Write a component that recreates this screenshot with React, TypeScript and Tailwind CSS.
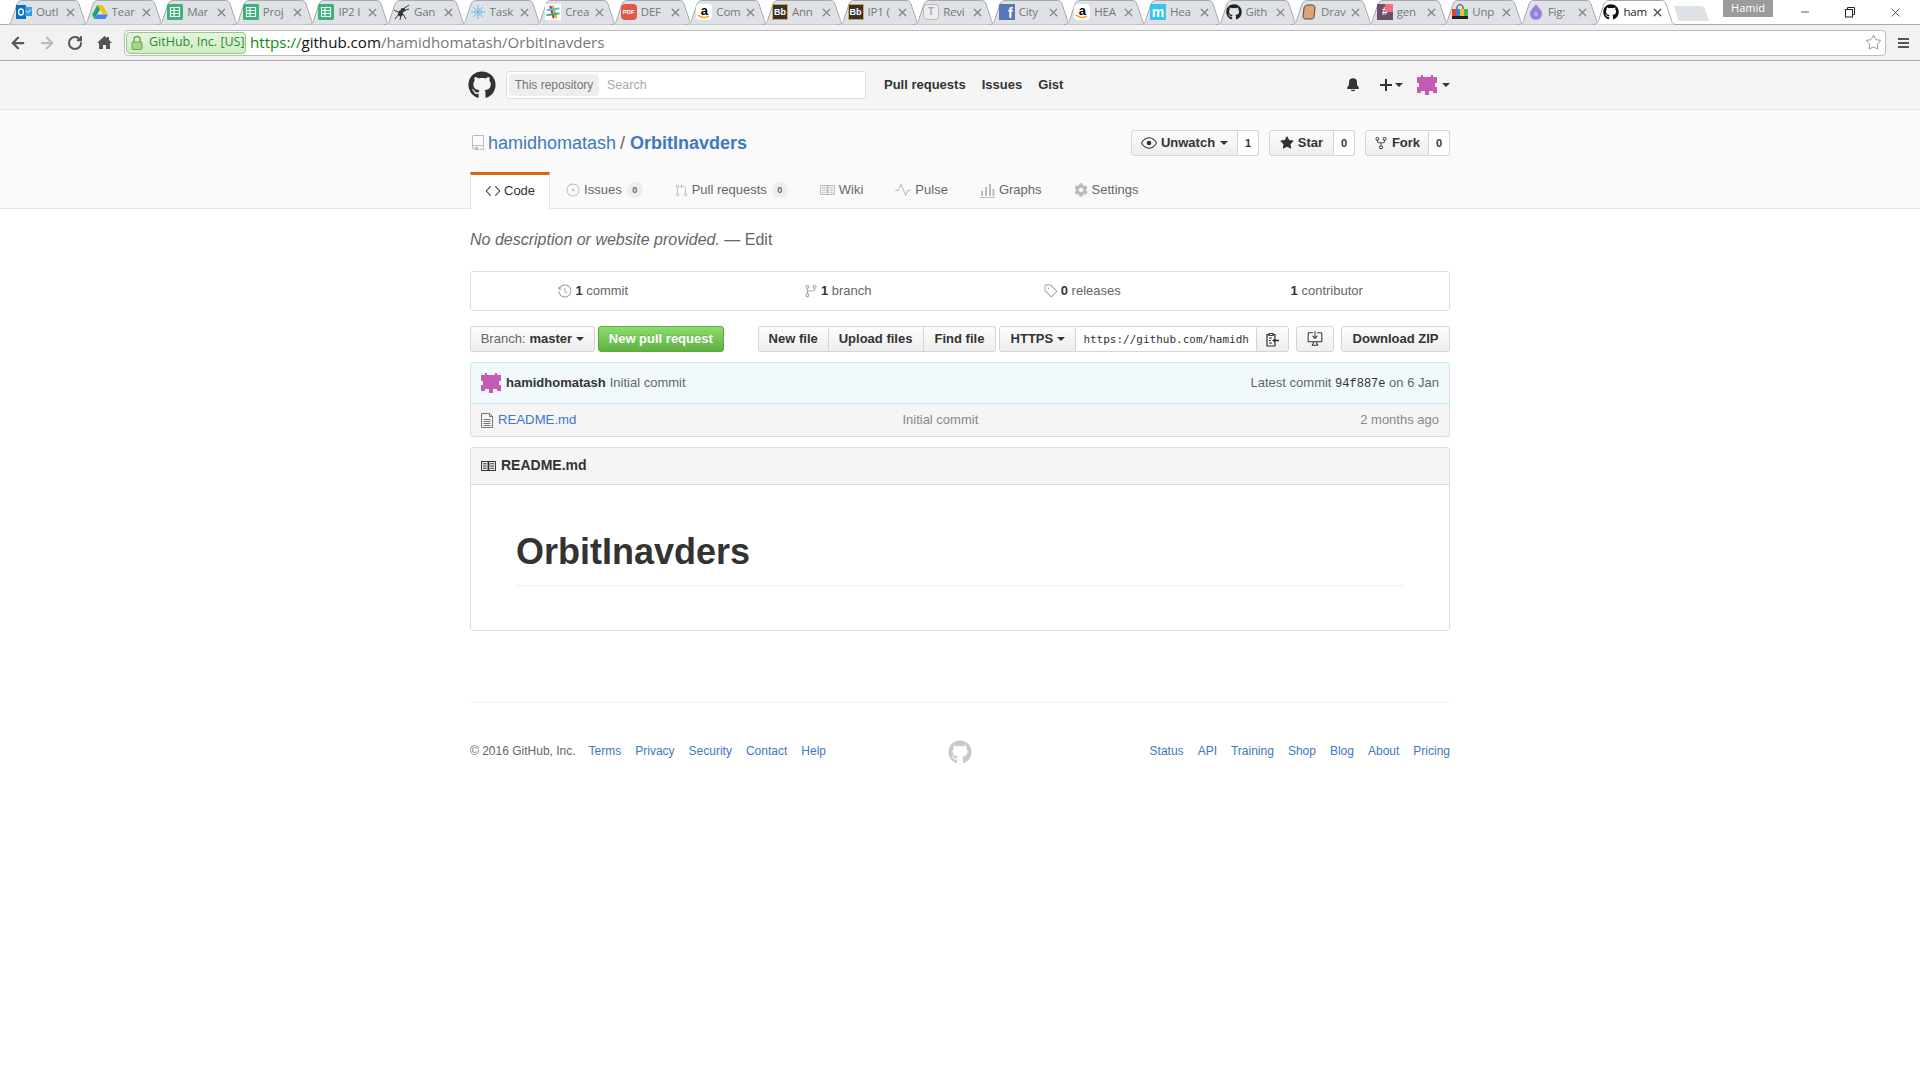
import React from "react";
import { GoRepo, GoCode, GoIssueOpened, GoGitPullRequest, GoPulse, GoEye, GoStarFill, GoRepoForked, GoBellFill, GoHistory, GoGitBranch, GoTag, GoDesktopDownload } from "react-icons/go";
import { FaGithub as GoMarkGithub, FaCog } from "react-icons/fa";
import { ArrowLeft, ArrowRight, RotateCw, Star, X, Minus } from "lucide-react";

function Caret({ className = "border-t-[#333]" }: { className?: string }) {
  return <span className={"inline-block w-0 h-0 border-x-[4px] border-x-transparent border-t-[4px] " + className} />;
}

function BookIcon({ size = 16 }: { size?: number }) {
  return (
    <svg width={size} height={size * 0.8} viewBox="0 0 16 13" fill="none" stroke="currentColor" strokeWidth="1.1">
      <path d="M.5 1.500h7v10h-7zM8.500 1.500h7v10h-7zM2 4h4M2 6.500h4M2 9h4M10 4h4M10 6.500h4M10 9h4" />
    </svg>
  );
}

function FileIcon() {
  return (
    <svg width="12" height="15" viewBox="0 0 12 15" fill="none" stroke="#777" strokeWidth="1">
      <path d="M.5.500h8l3 3v11H.5zM8.500.500v3h3M2.500 6.500h7M2.500 8.500h7M2.500 10.500h7M2.500 12.500h7" />
    </svg>
  );
}

function GraphIcon() {
  return (
    <svg width="15" height="15" viewBox="0 0 15 15" fill="currentColor">
      <rect x="0" y="14" width="15" height="1" />
      <rect x="1" y="8" width="2" height="5" />
      <rect x="5" y="4" width="2" height="9" />
      <rect x="9" y="1" width="2" height="12" />
      <rect x="12.500" y="6" width="2" height="7" />
    </svg>
  );
}

function Sheets() {
  return (
    <svg width="16" height="16" viewBox="0 0 16 16">
      <rect width="16" height="16" rx="1.5" fill="#3db37a" />
      <path d="M3.5 3.5h9v9h-9zM3.5 6.5h9M3.5 9.5h9M7 3.5v9" fill="none" stroke="#fff" strokeWidth="1.1" />
    </svg>
  );
}

function Letter({ bg, color, text, cls = "" }: { bg: string; color: string; text: string; cls?: string }) {
  return (
    <span className={"w-4 h-4 flex items-center justify-center text-[10px] font-bold leading-none [font-family:'Liberation_Sans',sans-serif] " + cls} style={{ background: bg, color }}>
      {text}
    </span>
  );
}

function Amazon() {
  return (
    <span className="relative w-4 h-4 bg-white rounded-sm flex justify-center">
      <span className="text-[13px] font-bold leading-[13px] text-black [font-family:'Liberation_Sans',sans-serif]">a</span>
      <svg className="absolute left-0 bottom-0" width="16" height="6" viewBox="0 0 16 6"><path d="M2 1c3 3 8 3 11 1" fill="none" stroke="#f90" strokeWidth="1.5" /></svg>
    </span>
  );
}

const favicons: React.ReactNode[] = [
  <svg key="o" width="16" height="16" viewBox="0 0 16 16"><rect x="0" y="1" width="10" height="14" fill="#0a6fc2" /><rect x="9" y="3" width="7" height="9" fill="#3d9be0" /><path d="M10.5 7l1.5 1.5 3-3" stroke="#fff" fill="none" /><ellipse cx="5" cy="8" rx="2.4" ry="3" fill="none" stroke="#fff" strokeWidth="1.3" /></svg>,
  <svg key="d" width="16" height="16" viewBox="0 0 16 16"><path d="M5.5 1h5L16 10.5h-5z" fill="#f4c20d" /><path d="M5.5 1L0 10.5 2.6 15 8 5.6z" fill="#1fa463" /><path d="M2.6 15h10.8L16 10.5H5.3z" fill="#4285f4" /></svg>,
  <Sheets key="s1" />, <Sheets key="s2" />, <Sheets key="s3" />,
  <svg key="a" width="16" height="16" viewBox="0 0 16 16"><ellipse cx="9" cy="6" rx="2.5" ry="2" fill="#333" /><ellipse cx="6.5" cy="9.5" rx="2.5" ry="3" fill="#333" /><path d="M9 5L15 1M9 7L15 5M5 10L1 15M7 11L6 16M9 10L12 15M4 8L0 6" stroke="#333" strokeWidth="1" /></svg>,
  <svg key="t" width="16" height="16" viewBox="0 0 16 16" stroke="#6cb7e6" strokeWidth="1" fill="none"><path d="M8 1v14M1 8h14M3 3l10 10M13 3L3 13" /><circle cx="8" cy="8" r="3.5" strokeDasharray="1.5 1" /></svg>,
  <svg key="sl" width="16" height="16" viewBox="0 0 16 16" strokeWidth="2.2" strokeLinecap="round"><rect width="16" height="16" fill="#fff" /><path d="M5.5 2.5l3 11" stroke="#e01e5a" /><path d="M10 2.5l3 11" stroke="#e8a820" transform="translate(-2 0)" /><path d="M2.5 6l11-1.5" stroke="#36c5f0" /><path d="M2.5 11l11-1.5" stroke="#2eb67d" /></svg>,
  <Letter key="p" bg="#e2574c" color="#fff" text="PDF" cls="!text-[6px] rounded-sm" />,
  <Amazon key="am1" />,
  <Letter key="b1" bg="#333" color="#fff" text="Bb" cls="border border-[#d9a441] !text-[9px]" />,
  <Letter key="b2" bg="#333" color="#fff" text="Bb" cls="border border-[#d9a441] !text-[9px]" />,
  <Letter key="tt" bg="#eeeeee" color="#aaa" text="T" cls="border border-[#bbb] rounded-sm" />,
  <Letter key="f" bg="#5a76b4" color="#fff" text="f" cls="!text-[14px] items-end justify-end pr-[2px]" />,
  <Amazon key="am2" />,
  <Letter key="m" bg="#34c6ec" color="#fff" text="m" cls="!text-[14px]" />,
  <GoMarkGithub key="g1" size={16} color="#222" />,
  <svg key="br" width="16" height="16" viewBox="0 0 16 16"><path d="M3 4c0-2 2-3 4-3h4c2 0 3 1 3 3l-1 9c0 1-1 2-2 2H5c-2 0-3-1-3-2z" fill="#d9a574" stroke="#5b4630" /></svg>,
  <span key="hs" className="relative w-4 h-4 bg-[#6a4e6e] flex items-center justify-center text-white text-[10px] font-bold leading-none [font-family:'Liberation_Sans',sans-serif]">#<span className="absolute right-0 top-0 w-2 h-2 bg-[#f2727f]" /></span>,
  <svg key="bag" width="16" height="16" viewBox="0 0 16 16"><path d="M5 5V3c0-3 6-3 6 0v2" fill="none" stroke="#333" /><rect y="5" width="4" height="8" fill="#e0452c" /><rect x="4" y="5" width="4" height="8" fill="#3b82d6" /><rect x="8" y="5" width="4" height="8" fill="#f2c029" /><rect x="12" y="5" width="4" height="8" fill="#4caf50" /><rect y="12" width="16" height="3" fill="#222" /></svg>,
  <svg key="dr" width="16" height="16" viewBox="0 0 16 16"><path d="M8 0c2 3 6 6 6 10a6 6 0 0 1-12 0c0-4 4-7 6-10z" fill="#9a7fe0" /><circle cx="8" cy="10" r="2" fill="#c6b6f0" /></svg>,
  <GoMarkGithub key="g2" size={16} color="#111" />,
];

const titles = ["Outl", "Tear", "Mar", "Proj", "IP2 I", "Gan", "Task", "Crea", "DEF", "Com", "Ann", "IP1 (", "Revi", "City", "HEA", "Hea", "Gith", "Drav", "gen", "Unp", "Fig:", "ham"];

function BrowserTab({ i }: { i: number }) {
  const active = i === titles.length - 1;
  return (
    <div className={"relative w-[75.6px] h-[25px] shrink-0 " + (active ? "z-10" : "")}>
      <svg className="absolute left-0 top-0" width="84" height="25" viewBox="0 0 84 25">
        <path d="M0 24.5C4 24.5 5 23 6 19L11 4C12 1.5 14 .5 16 .5H68C71 .5 72 1.5 73 4L78 19C79 23 80 24.5 84 24.5" fill={active ? "#ffffff" : "#dee1e6"} stroke="#a8a9ad" />
      </svg>
      <div className="relative flex items-center h-[24px] pl-[10px]">
        <span className="w-4 h-4 shrink-0 flex">{favicons[i]}</span>
        <span className={"ml-[4px] w-[26px] overflow-hidden whitespace-nowrap text-[11.5px] tracking-[-0.2px] leading-[24px] [font-family:'Open_Sans',sans-serif] " + (active ? "text-[#222]" : "text-[#777]")}>{titles[i]}</span>
        <X className={"ml-[2px] shrink-0 " + (active ? "text-[#555]" : "text-[#888]")} size={13} strokeWidth={2.5} />
      </div>
    </div>
  );
}

function BrowserChrome() {
  return (
    <div className="[font-family:'Open_Sans',sans-serif]">
      <div className="h-[25px] flex bg-white border-b border-[#a8a9ad] pl-[6px] relative">
        {titles.map((_, i) => <BrowserTab key={i} i={i} />)}
        <svg className="ml-[5px] mt-[5px] shrink-0" width="36" height="17" viewBox="0 0 36 17"><path d="M0 1h27c2 0 3 1 4 3l4 12H6c-1 0-2-1-2-2z" fill="#dee1e6" /></svg>
        <div className="ml-[13px] w-[50px] h-[17px] bg-[#9b9b9b] text-white text-[11px] leading-[16px] text-center shrink-0">Hamid</div>
        <Minus className="ml-[26px] mt-[6px] shrink-0 text-[#222]" size={12} strokeWidth={1.5} />
        <svg className="ml-[33px] mt-[6px] shrink-0" width="12" height="12" viewBox="0 0 12 12" fill="none" stroke="#222"><rect x="1.5" y="3.5" width="7" height="7.5" /><path d="M3.5 3.5v-2h7v7h-2" /></svg>
        <X className="ml-[32px] mt-[5px] shrink-0 text-[#222]" size={15} strokeWidth={1.2} />
      </div>
      <div className="h-[36px] bg-[#f2f2f2] border-b border-[#a9a9a9] flex items-center">
        <ArrowLeft className="ml-[9px] text-[#555]" size={18} strokeWidth={3} />
        <ArrowRight className="ml-[11px] text-[#bdbdbd]" size={18} strokeWidth={3} />
        <RotateCw className="ml-[11px] text-[#555]" size={16} strokeWidth={3} />
        <svg className="ml-[14px]" width="15" height="15" viewBox="0 0 15 15"><path d="M7.5 1L0 8h2v6h4v-4h3v4h4V8h2l-3-3V2h-2v1z" fill="#555" /></svg>
        <div className="ml-[12px] w-[1762px] h-[26px] bg-white border border-[#bdbdbd] rounded-sm flex items-center pl-[1px] relative">
          <div className="w-[120px] h-[22px] flex items-center bg-linear-to-b from-[#e6f4e0] to-[#d0ebc4] border border-[#97cc80] rounded-sm pl-[4px] text-[12.5px] text-[#1e8f1e] whitespace-nowrap">
            <svg className="mr-[6px] shrink-0" width="12" height="15" viewBox="0 0 12 15"><path d="M3 7V4.5a3 3 0 0 1 6 0V7" fill="none" stroke="#72a94f" strokeWidth="1.5" /><rect x="1" y="7" width="10" height="7.5" rx="1" fill="#a6d585" stroke="#6da34b" /></svg>
            GitHub, Inc. [US]
          </div>
          <span className="ml-[4px] text-[15.1px] leading-none whitespace-nowrap text-[#777]"><span className="text-[#0f8a0f]">https://</span><span className="text-[#111]">github.com</span>/hamidhomatash/OrbitInavders</span>
          <Star className="ml-auto mr-[3px] text-[#888]" size={17} strokeWidth={1.3} />
        </div>
        <div className="ml-[12px] flex flex-col gap-[2px]">
          <span className="w-[11px] h-[2px] bg-[#555]" /><span className="w-[11px] h-[2px] bg-[#555]" /><span className="w-[11px] h-[2px] bg-[#555]" />
        </div>
      </div>
    </div>
  );
}

function Puzzle({ className = "" }: { className?: string }) {
  return (
    <svg className={className} width="20" height="20" viewBox="0 0 5 5">
      <rect width="5" height="5" fill="#f0f0f0" />
      <path d="M0 .5h1V0h.5v.5h2V0H4v.5h1V2H4.5v1H5v1.500H4v-.5H3v1H2v-1H1v.5H0V3h.5V2H0z" fill="#c35cb5" />
    </svg>
  );
}

function GithubHeader() {
  return (
    <div className="h-[49px] bg-[#f5f5f5] border-b border-[#e5e5e5]">
      <div className="w-[980px] mx-auto h-full flex items-center relative">
        <GoMarkGithub size={28} className="text-[#333] -ml-[2px]" />
        <div className="ml-[10px] w-[360px] h-[28px] bg-white border border-[#ddd] rounded-[3px] flex items-center pl-[2px]">
          <span className="w-[90px] h-[22px] bg-[#eeeeee] rounded-sm text-[12px] leading-[22px] text-center text-[#767676]">This repository</span>
          <span className="ml-[8px] text-[12.5px] text-[#aaa]">Search</span>
        </div>
        <nav className="ml-[18px] flex gap-[16px] font-bold text-[13px] text-[#333]">
          <span>Pull requests</span><span>Issues</span><span>Gist</span>
        </nav>
        <div className="ml-auto flex items-center">
          <GoBellFill size={16} className="text-[#333] -ml-[1px]" />
          <svg className="ml-[18px]" width="14" height="14" viewBox="0 0 14 14" stroke="#333" strokeWidth="2"><path d="M7 1v12M1 7h12" /></svg>
          <Caret className="border-t-[#333] ml-[2px]" />
          <Puzzle className="ml-[14px]" />
          <Caret className="border-t-[#333] ml-[5px]" />
        </div>
      </div>
    </div>
  );
}

function CountButton({ icon, label, count, caret, width }: { icon: React.ReactNode; label: string; count: string; caret?: boolean; width: string }) {
  return (
    <div className="flex h-[26px] text-[13px] font-bold text-[#333]">
      <div className={"flex items-center justify-center gap-[4px] border border-[#d5d5d5] rounded-l-[3px] bg-linear-to-b from-[#fcfcfc] to-[#eeeeee] " + width}>
        {icon}{label}{caret && <Caret className="border-t-[#333] ml-[1px]" />}
      </div>
      <div className="w-[21px] flex items-center justify-center border border-l-0 border-[#d5d5d5] rounded-r-[3px] bg-white text-[11px]">{count}</div>
    </div>
  );
}

function RepoTab({ icon, label, badge, active }: { icon: React.ReactNode; label: string; badge?: string; active?: boolean }) {
  if (active) {
    return (
      <div className="h-[37px] px-[14px] pb-[3px] bg-white border-x border-[#e5e5e5] border-t-[3px] border-t-[#d26911] flex items-center gap-[3px] text-[13px] text-[#333]">
        {icon}{label}
      </div>
    );
  }
  return (
    <div className="h-[36px] px-[16px] flex items-center gap-[4px] text-[13px] text-[#666]">
      <span className="text-[#bbb] flex">{icon}</span>
      {label}
      {badge && <span className="ml-[1px] w-[16px] h-[16px] rounded-full bg-[#eeeeee] text-[9px] font-bold leading-[16px] text-center text-[#666]">{badge}</span>}
    </div>
  );
}

function PageHead() {
  return (
    <div className="h-[99px] bg-[#fafafa] border-b border-[#e5e5e5]">
      <div className="w-[980px] mx-auto">
        <div className="h-[62px] pt-[20px] flex items-start justify-between">
          <div className="flex items-center h-[26px] text-[18px] text-[#4078c0]">
            <GoRepo size={16} className="text-[#bbb] mr-[2px]" />
            <span>hamidhomatash</span><span className="text-[#666] ml-[4px] mr-[5px]">/</span><span className="font-bold">OrbitInavders</span>
          </div>
          <div className="flex gap-[10px]">
            <CountButton width="w-[107px]" icon={<GoEye size={16} />} label="Unwatch" count="1" caret />
            <CountButton width="w-[65px]" icon={<GoStarFill size={14} />} label="Star" count="0" />
            <CountButton width="w-[64px]" icon={<GoRepoForked size={14} />} label="Fork" count="0" />
          </div>
        </div>
        <div className="flex items-start">
          <RepoTab active icon={<GoCode size={16} className="text-[#333]" />} label="Code" />
          <RepoTab icon={<GoIssueOpened size={14} />} label="Issues" badge="0" />
          <RepoTab icon={<GoGitPullRequest size={13} />} label="Pull requests" badge="0" />
          <RepoTab icon={<BookIcon size={15} />} label="Wiki" />
          <RepoTab icon={<GoPulse size={16} />} label="Pulse" />
          <RepoTab icon={<GraphIcon />} label="Graphs" />
          <RepoTab icon={<FaCog size={14} />} label="Settings" />
        </div>
      </div>
    </div>
  );
}

function Summary({ icon, n, label }: { icon?: React.ReactNode; n: string; label: string }) {
  return (
    <div className="flex-1 flex items-center justify-center text-[13px] text-[#666] gap-[3px]">
      {icon && <span className="text-[#999] flex">{icon}</span>}
      <span><b className="text-[#333]">{n}</b> {label}</span>
    </div>
  );
}

const gradBtn = "h-[26px] flex items-center justify-center text-[13px] font-bold text-[#333] border border-[#d5d5d5] bg-linear-to-b from-[#fcfcfc] to-[#eeeeee]";

function RepoContent() {
  return (
    <div className="w-[980px] mx-auto">
      <div className="h-[62px] pt-[20px] text-[16px] leading-[22px] text-[#666]">
        <i>No description or website provided.</i> — Edit
      </div>
      <div className="h-[40px] border border-[#dddddd] rounded-[3px] flex">
        <Summary icon={<GoHistory size={14} />} n="1" label="commit" />
        <Summary icon={<GoGitBranch size={14} />} n="1" label="branch" />
        <Summary icon={<GoTag size={14} />} n="0" label="releases" />
        <Summary n="1" label="contributor" />
      </div>
      <div className="mt-[15px] flex h-[26px]">
        <div className={gradBtn + " w-[125px] rounded-[3px] gap-[4px] font-normal"}>
          <span className="text-[#666] font-normal">Branch:</span> <b>master</b> <Caret />
        </div>
        <div className="ml-[3px] w-[126px] h-[26px] rounded-[3px] flex items-center justify-center text-[13px] font-bold text-white border border-[#5ca941] bg-linear-to-b from-[#8add6d] to-[#60b044] [text-shadow:0_-1px_0_rgba(0,0,0,0.15)]">New pull request</div>
        <div className={gradBtn + " ml-[34px] w-[71px] rounded-l-[3px]"}>New file</div>
        <div className={gradBtn + " w-[95px] border-l-0"}>Upload files</div>
        <div className={gradBtn + " w-[73px] border-l-0 rounded-r-[3px]"}>Find file</div>
        <div className={gradBtn + " ml-[3px] w-[77px] rounded-l-[3px] gap-[4px]"}>HTTPS <Caret /></div>
        <div className="w-[180px] h-[26px] bg-white border-y border-[#d5d5d5] pl-[7px] text-[11px] leading-[26px] text-[#333] [font-family:'DejaVu_Sans_Mono',monospace] overflow-hidden whitespace-nowrap">https://github.com/hamidh</div>
        <div className={gradBtn + " w-[33px] rounded-r-[3px]"}>
          <svg width="13" height="15" viewBox="0 0 13 15" fill="none" stroke="#333" strokeWidth="1.2"><path d="M3 2.500H1v11.500h8v-3M9 6V2.500H7M3 3.500h4V1.500H3zM3 6h3M3 8.500h2M3 11h3" /><path d="M13 8.500H7.500M9.500 6.500l-2 2 2 2" strokeWidth="1.600" /></svg>
        </div>
        <div className={gradBtn + " ml-[7px] w-[38px] rounded-[3px]"}><GoDesktopDownload size={16} /></div>
        <div className={gradBtn + " ml-[7px] w-[109px] rounded-[3px]"}>Download ZIP</div>
      </div>
      <div className="mt-[10px] h-[42px] bg-[#f2f9fc] border border-[#c9e6f2] rounded-t-[3px] flex items-center px-[10px] text-[13px] text-[#666]">
        <Puzzle />
        <b className="ml-[5px] text-[#333]">hamidhomatash</b>
        <span className="ml-[4px]">Initial commit</span>
        <span className="ml-auto">Latest commit <span className="text-[12px] text-[#333] [font-family:'Liberation_Mono',monospace]">94f887e</span> on 6 Jan</span>
      </div>
      <div className="h-[33px] bg-[#f5f5f5] border-x border-b border-[#dddddd] rounded-b-[3px] flex items-center px-[10px] text-[13px] text-[#888]">
        <FileIcon />
        <span className="ml-[5px] text-[13.2px] text-[#4078c0]">README.md</span>
        <span className="ml-[326px]">Initial commit</span>
        <span className="ml-auto">2 months ago</span>
      </div>
      <div className="mt-[10px] border border-[#dddddd] rounded-[3px] h-[184px]">
        <div className="h-[37px] pb-[1px] bg-[#f5f5f5] border-b border-[#dddddd] flex items-center pl-[10px] gap-[5px] text-[14px] font-bold text-[#333]">
          <BookIcon size={15} /> README.md
        </div>
        <div className="px-[45px] pt-[44px]">
          <h1 className="h-[57px] text-[36px] leading-[45px] font-bold text-[#333] border-b border-[#eeeeee]">OrbitInavders</h1>
        </div>
      </div>
      <div className="mt-[71px] border-t border-[#eeeeee] pt-[38px] h-[100px] grid grid-cols-[1fr_auto_1fr] items-start text-[12px] leading-[20px] text-[#666]">
        <div className="flex gap-[14px]">
          <span className="-mr-[1px]">© 2016 GitHub, Inc.</span>
          {["Terms", "Privacy", "Security", "Contact", "Help"].map((t) => <span key={t} className="text-[#4078c0]">{t}</span>)}
        </div>
        <GoMarkGithub size={24} className="text-[#c9c9c9] -mt-[1px]" />
        <div className="flex gap-[14px] justify-end">
          {["Status", "API", "Training", "Shop", "Blog", "About", "Pricing"].map((t) => <span key={t} className="text-[#4078c0]">{t}</span>)}
        </div>
      </div>
    </div>
  );
}

export default function App() {
  return (
    <div className="w-[1920px] h-[1080px] overflow-hidden bg-white [font-family:'Liberation_Sans',Arial,sans-serif]">
      <BrowserChrome />
      <GithubHeader />
      <PageHead />
      <RepoContent />
    </div>
  );
}
